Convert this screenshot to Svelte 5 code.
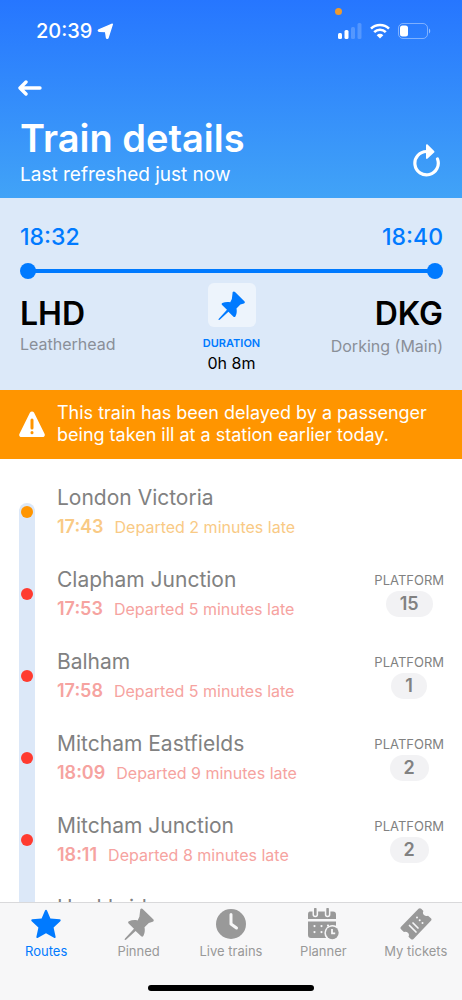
<script lang="ts">
	type Stop = {
		name: string;
		time: string;
		status: string;
		severity: 'minor' | 'major';
		platform?: string;
	};

	const stops: Stop[] = [
		{ name: 'London Victoria', time: '17:43', status: 'Departed 2 minutes late', severity: 'minor' },
		{ name: 'Clapham Junction', time: '17:53', status: 'Departed 5 minutes late', severity: 'major', platform: '15' },
		{ name: 'Balham', time: '17:58', status: 'Departed 5 minutes late', severity: 'major', platform: '1' },
		{ name: 'Mitcham Eastfields', time: '18:09', status: 'Departed 9 minutes late', severity: 'major', platform: '2' },
		{ name: 'Mitcham Junction', time: '18:11', status: 'Departed 8 minutes late', severity: 'major', platform: '2' },
		{ name: 'Hackbridge', time: '18:14', status: 'Departed 8 minutes late', severity: 'major', platform: '2' }
	];

	const tabs = [
		{ id: 'routes', label: 'Routes' },
		{ id: 'pinned', label: 'Pinned' },
		{ id: 'live', label: 'Live trains' },
		{ id: 'planner', label: 'Planner' },
		{ id: 'tickets', label: 'My tickets' }
	];

	let activeTab = $state('routes');
</script>

{#snippet pin()}
	<path
		d="M17.300 1.200c.8-.9 1.900-.8 2.600 0l10.300 10c.9.9.7 2.200-.5 2.600l-3.900 1.100-4.300 4.300c.7 3.400.1 6.500-1.200 8.800-.5.9-1.400 1-2.100.3l-5.600-5.400-9.600 8.800-1.500.5.5-1.700 9-9.800-5.400-5.300c-.8-.8-.6-1.700.3-2.100 2.700-1.200 5.500-1.600 8.700-.9l1.800-3.700z"
		fill="currentColor"
	/>
{/snippet}

<div class="screen">
	<header>
		<div class="status-bar">
			<div class="clock">
				<span>20:39</span>
				<svg width="17" height="17" viewBox="0 0 17 17" aria-hidden="true">
					<path
						d="M15.300 1.200 11 14.800c-.3.900-1.300.8-1.500-.2L8.600 8.600l-6.400-.4C1.200 8.100 1 7.200 1.900 6.800z"
						fill="#fff"
						stroke="#fff"
						stroke-width="1.400"
						stroke-linejoin="round"
					/>
				</svg>
			</div>
			<span class="recording-dot"></span>
			<div class="signals">
				<svg width="24" height="16" viewBox="0 0 24 16" aria-hidden="true">
					<g fill="#fff">
						<rect x="0" y="10" width="4" height="6" rx="1.500" />
						<rect x="6.500" y="7" width="4" height="9" rx="1.500" />
						<rect x="13" y="4" width="4" height="12" rx="1.500" opacity=".2" />
						<rect x="19.500" y="0" width="4" height="16" rx="1.500" opacity=".2" />
					</g>
				</svg>
				<svg width="20" height="16" viewBox="0 0 20 16" aria-hidden="true">
					<g fill="none" stroke="#fff" stroke-width="2.600">
						<path d="M1 5.700a12.800 12.800 0 0 1 18 0" />
						<path d="M4.200 9.100a8.200 8.200 0 0 1 11.600 0" />
					</g>
					<path d="M10 15.500 6.700 12.200a4.700 4.700 0 0 1 6.600 0z" fill="#fff" />
				</svg>
				<svg width="33" height="16" viewBox="0 0 33 16" aria-hidden="true">
					<rect x=".5" y=".5" width="29" height="15" rx="4.500" fill="none" stroke="#fff" opacity=".4" />
					<rect x="2" y="2.500" width="8" height="11" rx="2.500" fill="#fff" />
					<path d="M31 5.500c1.600.7 1.600 4.300 0 5z" fill="#fff" opacity=".5" />
				</svg>
			</div>
		</div>

		<button class="icon-button back" type="button" aria-label="Back">
			<svg width="24" height="16" viewBox="0 0 24 16" aria-hidden="true">
				<path d="M22 8H2.500M8 2 2 8l6 6" fill="none" stroke="#fff" stroke-width="3.400" stroke-linecap="round" stroke-linejoin="round" />
			</svg>
		</button>

		<div class="title-row">
			<div>
				<h1>Train details</h1>
				<p>Last refreshed just now</p>
			</div>
			<button class="icon-button" type="button" aria-label="Refresh">
				<svg width="28" height="33" viewBox="0 0 28 33" aria-hidden="true">
					<path d="M14.500 7.500A11.700 11.700 0 1 0 25.500 15" fill="none" stroke="#fff" stroke-width="3.200" stroke-linecap="round" />
					<path d="M14 1.300c0-1 .9-1.400 1.600-.7l6.500 6.500c.5.5.5 1 0 1.500l-6.500 6c-.7.7-1.600.3-1.600-.7z" fill="#fff" />
				</svg>
			</button>
		</div>
	</header>

	<section class="journey" aria-label="Journey summary">
		<div class="times">
			<time>18:32</time>
			<time>18:40</time>
		</div>
		<div class="line"></div>
		<div class="places">
			<div class="place">
				<strong>LHD</strong>
				<span>Leatherhead</span>
			</div>
			<div class="duration">
				<button class="pin-button" type="button" aria-label="Pin train">
					<svg width="29" height="29" viewBox="0 0 32 32" aria-hidden="true">{@render pin()}</svg>
				</button>
				<span class="duration-label">DURATION</span>
				<span>0h 8m</span>
			</div>
			<div class="place end">
				<strong>DKG</strong>
				<span>Dorking (Main)</span>
			</div>
		</div>
	</section>

	<div class="alert" role="status">
		<svg width="26" height="27" viewBox="0 0 26 27" aria-hidden="true">
			<path d="M11 1.500c.9-1.500 3.100-1.500 4 0l10.500 21.200c.9 1.700-.1 3.300-2 3.300H2.500c-1.900 0-2.900-1.600-2-3.300z" fill="#fff" />
			<path d="M13 9v8M13 21.500v.2" stroke="#ff9500" stroke-width="3" stroke-linecap="round" />
		</svg>
		<p>This train has been delayed by a passenger being taken ill at a station earlier today.</p>
	</div>

	<main>
		<ol>
			{#each stops as stop (stop.name)}
				<li class={stop.severity}>
					<div class="rail"><span></span></div>
					<div class="stop">
						<h2>{stop.name}</h2>
						<p><time>{stop.time}</time>{stop.status}</p>
					</div>
					{#if stop.platform}
						<div class="platform">
							<span>PLATFORM</span>
							<strong>{stop.platform}</strong>
						</div>
					{/if}
				</li>
			{/each}
		</ol>
	</main>

	<nav aria-label="Main">
		<div class="tabs">
			{#each tabs as tab (tab.id)}
				<button
					type="button"
					class:active={activeTab === tab.id}
					aria-current={activeTab === tab.id ? 'page' : undefined}
					onclick={() => (activeTab = tab.id)}
				>
					<svg width="32" height="32" viewBox="0 0 32 32" aria-hidden="true">
						{#if tab.id === 'routes'}
							<path d="M15 2.400c.4-1 1.600-1 2 0l3.400 8.100 9.300.8c1.100.1 1.400 1.100.6 1.900l-6.700 6.200 2 9.300c.2 1.100-.7 1.600-1.600 1.100L16 25.300l-8 4.500c-.9.5-1.800-.1-1.600-1.100l2-9.300-6.700-6.200c-.8-.8-.5-1.800.6-1.900l9.300-.8z" fill="currentColor" />
						{:else if tab.id === 'pinned'}
							{@render pin()}
						{:else if tab.id === 'live'}
							<circle cx="16" cy="16" r="15" fill="currentColor" />
							<path d="M16 6.500V16l5.500 4" fill="none" stroke="#f7f7f8" stroke-width="3" stroke-linecap="round" stroke-linejoin="round" />
						{:else if tab.id === 'planner'}
							<path d="M3 3.500h2.500v3a2.800 2.800 0 0 0 5.600 0v-3h6.700v3a2.800 2.800 0 0 0 5.600 0v-3H26q3 0 3 3V11H1V6.500q0-3 2-3z" fill="currentColor" />
							<path d="M8.300 1v5.500M20.600 1v5.500" stroke="currentColor" stroke-width="2.600" stroke-linecap="round" />
							<path d="M1 13.500h28v4.300a8 8 0 0 0-9.800 12.200H4q-3 0-3-3z" fill="currentColor" />
							<path d="M7.500 18v.1M7.500 24v.1M14.500 18v.1M14.500 24v.1M21 17.500v.1" stroke="#f7f7f8" stroke-width="2.200" stroke-linecap="round" />
							<circle cx="25.300" cy="24.800" r="6.400" fill="currentColor" />
							<path d="M25 21v4.300h3.200" fill="none" stroke="#f7f7f8" stroke-width="1.800" />
						{:else}
							<path d="M18.500.8q1.400-1.200 2.700 0l2.200 2.200q-1.200 2.300.6 4t4 .7l2.900 2.600q1.200 1.200 0 2.500L13.500 31q-1.300 1.200-2.700 0l-2.300-2.300q1.200-2.300-.6-4t-4-.7L1 21.300q-1.200-1.200 0-2.500z" fill="currentColor" />
							<path d="m9.500 17.500 6.500 6.500M13 15l5 5" stroke="#f7f7f8" stroke-width="1.700" stroke-linecap="round" />
							<path d="M17 9.500v.1M19.700 12.200v.1M22.500 15v.1" stroke="#f7f7f8" stroke-width="2" stroke-linecap="round" />
						{/if}
					</svg>
					<span>{tab.label}</span>
				</button>
			{/each}
		</div>
		<div class="home-indicator"></div>
	</nav>
</div>

<style>
	:global(body) {
		margin: 0;
	}

	.screen {
		display: flex;
		flex-direction: column;
		height: 100dvh;
		overflow: hidden;
		color: #000;
		background: #fff;
		font-family: Inter, 'Liberation Sans', sans-serif;
	}

	h1,
	h2,
	p,
	ol {
		margin: 0;
		padding: 0;
	}

	svg {
		display: block;
		flex: none;
	}

	button {
		padding: 0;
		border: 0;
		background: none;
		color: inherit;
		font: inherit;
		cursor: pointer;
	}

	header {
		flex: none;
		padding: 16px 20px 10px;
		color: #fff;
		background: linear-gradient(#2676ff, #41a3f7);
	}

	.status-bar {
		position: relative;
		display: flex;
		align-items: center;
		justify-content: space-between;
		height: 30px;
		padding: 0 11px 0 16px;
	}

	.clock {
		display: flex;
		align-items: center;
		gap: 5px;
		font-size: 20px;
		font-weight: 500;
	}

	.recording-dot {
		position: absolute;
		top: -8px;
		right: 100px;
		width: 7px;
		height: 7px;
		border-radius: 50%;
		background: #ee9a2e;
	}

	.signals {
		display: flex;
		align-items: center;
		gap: 8px;
	}

	.icon-button {
		display: flex;
	}

	.back {
		margin: 34px 0 0 -2px;
	}

	.title-row {
		display: flex;
		align-items: flex-end;
		justify-content: space-between;
		margin-top: 20px;
	}

	.title-row .icon-button {
		margin: 0 2px 11px 0;
	}

	h1 {
		font-size: 38px;
		font-weight: 600;
		line-height: 44px;
	}

	header p {
		margin-top: 2px;
		font-size: 19px;
		line-height: 26px;
	}

	.journey {
		flex: none;
		padding: 22px 19px 17px 20px;
		background: #dce9f9;
	}

	.times {
		display: flex;
		justify-content: space-between;
		color: #007aff;
		font-size: 23px;
		font-weight: 500;
		line-height: 34px;
	}

	.line {
		display: flex;
		align-items: center;
		justify-content: space-between;
		height: 16px;
		margin-top: 9px;
		background: linear-gradient(#007aff, #007aff) center / 98% 4px no-repeat;
	}

	.line::before,
	.line::after {
		width: 16px;
		height: 16px;
		border-radius: 50%;
		background: #007aff;
		content: '';
	}

	.places {
		display: grid;
		grid-template-columns: 1fr auto 1fr;
		margin-top: 4px;
	}

	.place {
		display: flex;
		flex-direction: column;
		padding-top: 12px;
		color: #8a8f98;
		font-size: 16px;
		line-height: 22px;
	}

	.place strong {
		color: #000;
		font-size: 32px;
		font-weight: 600;
		line-height: 38px;
	}

	.place.end {
		text-align: right;
	}

	.place.end span {
		line-height: 26px;
	}

	.duration {
		display: flex;
		flex-direction: column;
		align-items: center;
		font-size: 16px;
		line-height: 20px;
	}

	.pin-button {
		display: grid;
		place-items: center;
		width: 48px;
		height: 44px;
		margin-bottom: 6px;
		border-radius: 6px;
		color: #007aff;
		background: #edf4fc;
	}

	.duration-label {
		color: #007aff;
		font-size: 11px;
		font-weight: 600;
	}

	.alert {
		display: flex;
		flex: none;
		align-items: center;
		gap: 12px;
		padding: 12px 19px 13px;
		color: #fff;
		background: #ff9500;
		font-size: 18px;
		line-height: 22px;
	}

	main {
		flex: 1;
		min-height: 0;
		overflow-y: auto;
		scrollbar-width: none;
	}

	ol {
		padding: 12px 18px 0 19px;
		list-style: none;
	}

	li {
		display: flex;
		align-items: center;
		height: 82px;
		color: #818181;
	}

	.rail {
		display: flex;
		box-sizing: border-box;
		align-items: center;
		align-self: stretch;
		justify-content: center;
		width: 16px;
		background: #dce8f8;
	}

	li:first-child .rail {
		align-items: flex-start;
		margin-top: 32px;
		padding-top: 3px;
		border-radius: 8px 8px 0 0;
	}

	.rail span {
		width: 12px;
		height: 12px;
		border-radius: 50%;
		background: #ff3b30;
	}

	.minor .rail span {
		background: #ff9500;
	}

	.stop {
		flex: 1;
		padding-left: 22px;
	}

	h2 {
		font-size: 21px;
		font-weight: 400;
		line-height: 30px;
	}

	.stop p {
		color: #f6a3a0;
		font-size: 16px;
		line-height: 28px;
	}

	.minor .stop p {
		color: #f9ca85;
	}

	.stop time {
		margin-right: 11px;
		font-size: 18px;
		font-weight: 600;
	}

	.platform {
		display: flex;
		flex-direction: column;
		align-items: center;
		padding-bottom: 2px;
		font-size: 13px;
		line-height: 22px;
	}

	.platform strong {
		padding: 0 14px;
		border-radius: 13px;
		background: #f2f2f4;
		font-size: 18px;
		font-weight: 600;
		line-height: 26px;
	}

	nav {
		flex: none;
		border-top: 1px solid #d9d9db;
		background: #f7f7f8;
	}

	.tabs {
		display: grid;
		grid-template-columns: repeat(5, 1fr);
		padding-top: 5px;
	}

	.tabs button {
		display: flex;
		flex-direction: column;
		align-items: center;
		gap: 2px;
		color: #999;
		font-size: 13px;
		line-height: 18px;
	}

	.tabs .active {
		color: #007aff;
	}

	.home-indicator {
		width: 36%;
		height: 6px;
		margin: 25px auto 9px;
		border-radius: 3px;
		background: #000;
	}
</style>
